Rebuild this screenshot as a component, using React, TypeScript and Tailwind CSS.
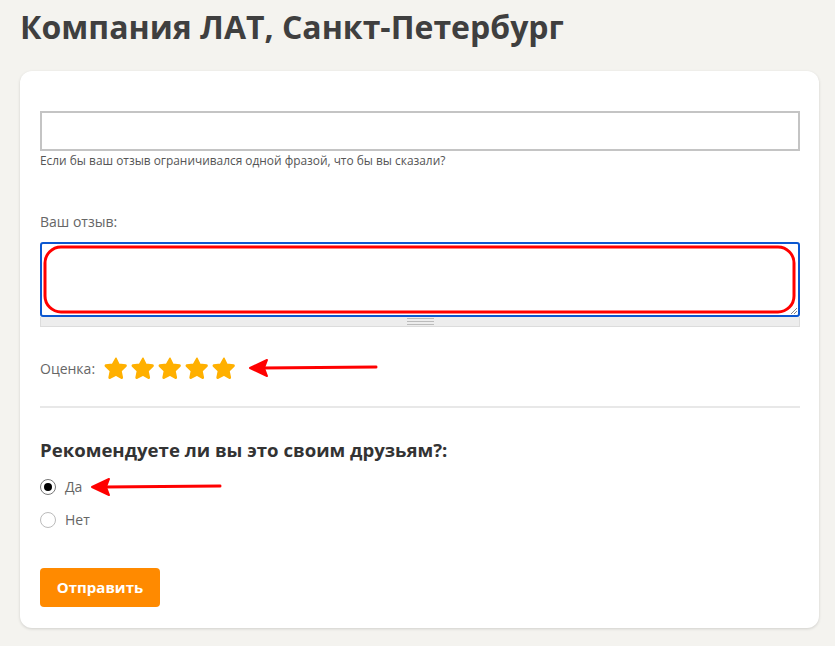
const Star = () => (
  <svg width="24" height="24" viewBox="0 0 24 24">
    <path
      d="M12 2.2l2.9 6.1 6.6.8c.6.1.8.8.4 1.2l-4.9 4.6 1.3 6.6c.1.6-.5 1-1 .7L12 19l-5.9 3.2c-.5.3-1.1-.1-1-.7l1.3-6.6-4.9-4.6c-.4-.4-.2-1.1.4-1.2l6.6-.8z"
      fill="#ffb000"
      stroke="#ffb000"
      strokeWidth="1.5"
      strokeLinejoin="round"
    />
  </svg>
);

const Arrow = ({ width }: { width: number }) => (
  <svg width={width} height="20" viewBox={`0 0 ${width} 20`} className="block">
    <path d="M2 10 L19 2 L16 10 L19 18 Z" fill="#f00" stroke="#f00" strokeWidth="2" strokeLinejoin="round" />
    <path d={`M14 10 L${width - 2} 9`} stroke="#f00" strokeWidth="3" strokeLinecap="round" />
  </svg>
);

const App = () => {
  return (
    <div
      className="min-h-[646px] bg-[#f4f3ef] pl-5 pr-4 pt-[7px] pb-[18px] text-[#555]"
      style={{ fontFamily: '"Open Sans", "Noto Sans", sans-serif' }}
    >
      <h1 className="text-[32px] font-bold leading-[40px] text-[#3f3f3f]">
        Компания ЛАТ, Санкт-Петербург
      </h1>

      <div className="mt-[24px] rounded-xl bg-white pl-5 pr-[19px] pt-10 pb-[21px] shadow-[0_1px_3px_rgba(0,0,0,0.15)]">
        <div className="h-10 border-2 border-[#c4c4c4]" />
        <p className="mt-[1px] text-[11.9px] leading-[16px] text-[#555]">
          Если бы ваш отзыв ограничивался одной фразой, что бы вы сказали?
        </p>

        <p className="mt-[44px] text-[14px] leading-[20px] text-[#666]">Ваш отзыв:</p>
        <div className="mt-[10px]">
          <div className="relative h-[75px] rounded-[3px] border-2 border-[#0b57d0] bg-white">
            <svg className="absolute inset-0 h-full w-full">
              <rect x="3" y="3" width="calc(100% - 7px)" height="65" rx="16" fill="none" stroke="#f00" strokeWidth="3" />
            </svg>
            <svg className="absolute right-0 bottom-0" width="8" height="8" viewBox="0 0 8 8">
              <path d="M7 1 L1 7 M7 4 L4 7" stroke="#888" strokeWidth="1" />
            </svg>
          </div>
          <div className="flex h-[10px] items-center justify-center border border-t-0 border-[#dcdcdc] bg-[#ededed]">
            <div className="flex w-[27px] flex-col gap-[2px]">
              <div className="h-px bg-[#bbb]" />
              <div className="h-px bg-[#bbb]" />
              <div className="h-px bg-[#bbb]" />
            </div>
          </div>
        </div>

        <div className="mt-[29px] flex h-6 items-center">
          <span className="text-[14px] text-[#666]">Оценка:</span>
          <div className="ml-[9px] flex gap-[3px]">
            <Star />
            <Star />
            <Star />
            <Star />
            <Star />
          </div>
          <div className="ml-[12px]">
            <Arrow width={130} />
          </div>
        </div>

        <div className="mt-[26px] h-[2px] bg-[#e8e8e8]" />

        <h2 className="mt-[29px] text-[18.6px] font-bold leading-[26px] text-[#333]">
          Рекомендуете ли вы это своим друзьям?:
        </h2>

        <div className="mt-[14px] flex flex-col gap-[13px]">
          <label className="flex h-5 items-center">
            <span className="flex h-[16px] w-[16px] items-center justify-center rounded-full border border-[#777] bg-white">
              <span className="h-[8px] w-[8px] rounded-full bg-black" />
            </span>
            <span className="ml-[9px] text-[14px] leading-[20px] text-[#666]">Да</span>
            <div className="ml-[8px]">
              <Arrow width={132} />
            </div>
          </label>
          <label className="flex h-5 items-center">
            <span className="h-[16px] w-[16px] rounded-full border border-[#bbb] bg-white" />
            <span className="ml-[9px] text-[14px] leading-[20px] text-[#666]">Нет</span>
          </label>
        </div>

        <button className="mt-[38px] h-[39px] w-[120px] rounded-[4px] bg-[#ff8a00] text-[15px] font-bold text-white">
          Отправить
        </button>
      </div>
    </div>
  );
};

export default App;
